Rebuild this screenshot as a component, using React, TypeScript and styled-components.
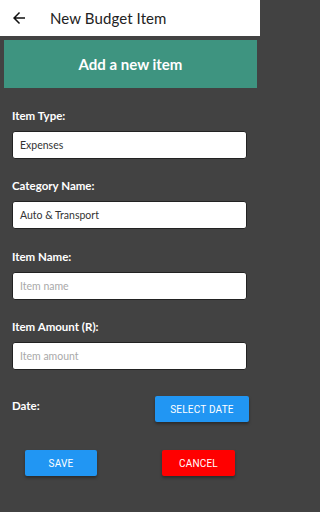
import React from "react";
import styled, { createGlobalStyle } from "styled-components";

const Global = createGlobalStyle`
  html, body { margin: 0; padding: 0; background: #424242; }
  body { height: 512px; overflow: hidden; }
  * { box-sizing: border-box; }
`;

const Screen = styled.div`
  width: 260px;
  height: 512px;
  background: #424242;
  display: flex;
  flex-direction: column;
  font-family: Lato, "Noto Sans", sans-serif;
`;

const Header = styled.header`
  height: 36px;
  background: #ffffff;
  display: flex;
  align-items: center;
  padding-left: 10px;
  gap: 22px;
`;

const BackIcon = styled.svg`
  width: 18px;
  height: 18px;
  flex: none;
`;

const Title = styled.h1`
  margin: 0;
  font-size: 15px;
  font-weight: 400;
  color: #222;
  letter-spacing: 0.1px;
`;

const Banner = styled.div`
  margin: 4px 3px 0 4px;
  height: 48px;
  background: #3e9480;
  display: flex;
  align-items: center;
  justify-content: center;
  color: #fff;
  font-weight: 700;
  font-size: 15px;
`;

const Form = styled.div`
  display: flex;
  flex-direction: column;
  padding: 21px 13px 0 12px;
`;

const Field = styled.div`
  display: flex;
  flex-direction: column;
  gap: 8px;
  margin-bottom: 20.3px;
`;

const Label = styled.label`
  color: #fff;
  font-size: 11.5px;
  font-weight: 700;
  line-height: 14px;
`;

const Input = styled.div<{ $placeholder?: boolean }>`
  height: 28px;
  background: #fff;
  border: 1px solid #222;
  border-radius: 3px;
  display: flex;
  align-items: center;
  padding-left: 7px;
  font-size: 10.5px;
  color: ${(p) => (p.$placeholder ? "#a9a9a9" : "#333")};
`;

const DateRow = styled.div`
  display: flex;
  justify-content: space-between;
  align-items: flex-start;
  margin-top: 6px;
`;

const DateLabel = styled(Label)`
  margin-top: 3px;
`;

const Button = styled.button<{ $color: string; $width: number }>`
  width: ${(p) => p.$width}px;
  height: 26px;
  border: none;
  border-radius: 2px;
  background: ${(p) => p.$color};
  color: #fff;
  font-family: Roboto, "Liberation Sans", sans-serif;
  font-size: 10px;
  text-transform: uppercase;
  letter-spacing: 0.2px;
  box-shadow: 0 2px 3px rgba(0, 0, 0, 0.35);
  padding: 0;
`;

const ActionRow = styled.div`
  display: flex;
  justify-content: space-between;
  padding: 0 25px 0 25px;
  margin-top: 28px;
`;

const SelectWrap = styled.div`
  margin-right: -2px;
`;

const fields = [
  { label: "Item Type:", value: "Expenses" },
  { label: "Category Name:", value: "Auto & Transport" },
  { label: "Item Name:", value: "Item name", placeholder: true },
  { label: "Item Amount (R):", value: "Item amount", placeholder: true },
];

export default function App() {
  return (
    <>
      <Global />
      <Screen>
        <Header>
          <BackIcon viewBox="0 0 24 24">
            <path
              d="M20 11H7.83l5.59-5.59L12 4l-8 8 8 8 1.41-1.41L7.83 13H20v-2z"
              fill="#111"
            />
          </BackIcon>
          <Title>New Budget Item</Title>
        </Header>
        <Banner>Add a new item</Banner>
        <Form>
          {fields.map((f) => (
            <Field key={f.label}>
              <Label>{f.label}</Label>
              <Input $placeholder={f.placeholder}>{f.value}</Input>
            </Field>
          ))}
          <DateRow>
            <DateLabel>Date:</DateLabel>
            <SelectWrap>
              <Button $color="#2196f3" $width={94}>Select Date</Button>
            </SelectWrap>
          </DateRow>
        </Form>
        <ActionRow>
          <Button $color="#2196f3" $width={72}>Save</Button>
          <Button $color="#ff0000" $width={73}>Cancel</Button>
        </ActionRow>
      </Screen>
    </>
  );
}
